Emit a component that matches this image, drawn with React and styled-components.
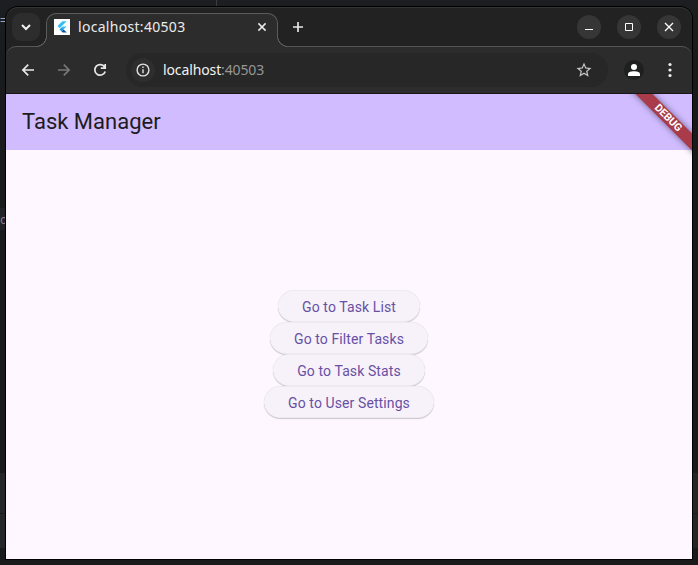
import React from "react";
import styled, { createGlobalStyle, css } from "styled-components";

const GlobalStyle = createGlobalStyle`
  *, *::before, *::after { box-sizing: border-box; }
  body { margin: 0; background: #1a1b1d; overflow: hidden; }
  button { border: 0; padding: 0; background: none; font: inherit; color: inherit; }
  svg { display: block; flex: none; }
`;

const Desktop = styled.div`
  position: relative;
  width: 698px;
  height: 565px;
  padding: 7px 6px 6px;
  background: linear-gradient(#1c1e21, #191a1c 60px, #191a1b);
  font-family: "Noto Sans", "Open Sans", sans-serif;
`;

const EditorLine = styled.span`
  position: absolute;
  left: ${(p) => p.$x}px;
  top: ${(p) => p.$y}px;
  width: ${(p) => p.$w}px;
  height: ${(p) => p.$h}px;
  background: ${(p) => p.$bg};
`;

const EditorText = styled.span`
  position: absolute;
  left: 0;
  top: ${(p) => p.$y}px;
  font: 9px/14px "Liberation Mono", monospace;
  font-size: ${(p) => p.$size}px;
  color: ${(p) => p.$color};
`;

const BrowserWindow = styled.div`
  position: relative;
  display: flex;
  flex-direction: column;
  height: 552px;
  border-radius: 12px 12px 0 0;
  background: #222222;
  box-shadow: 0 0 0 1px #000;
`;

const TabStrip = styled.div`
  display: flex;
  align-items: flex-start;
  height: 39px;
  padding: 6px 11px 0 6px;
  border-radius: 12px 12px 0 0;
  box-shadow: inset 0 1px #343434;
`;

const TabSearch = styled.button`
  display: grid;
  place-items: center;
  width: 28px;
  height: 28px;
  border-radius: 9px;
  background: #2d2d2d;
`;

const flare = css`
  content: "";
  position: absolute;
  bottom: 0;
  width: 11px;
  height: 11px;
`;

const Tab = styled.div`
  position: relative;
  z-index: 1;
  display: flex;
  align-items: center;
  width: 232px;
  height: 34px;
  margin-left: 6px;
  padding: 0 10px 6px 7px;
  border: 1px solid #5b5b5b;
  border-bottom: 0;
  border-radius: 10px 10px 0 0;
  background: #2c2c2c;

  &::before {
    ${flare}
    right: 100%;
    background: radial-gradient(circle at 0 0, transparent 9.7px, #5b5b5b 10.1px 10.8px, #2c2c2c 11.2px);
  }
  &::after {
    ${flare}
    left: 100%;
    background: radial-gradient(circle at 100% 0, transparent 9.7px, #5b5b5b 10.1px 10.8px, #2c2c2c 11.2px);
  }
`;

const Favicon = styled.span`
  display: grid;
  place-items: center;
  width: 16px;
  height: 16px;
  margin-top: -1px;
  background: #fff;
`;

const TabTitle = styled.span`
  flex: 1;
  margin: -2px 0 0 8px;
  font-size: 14px;
  line-height: 20px;
  letter-spacing: 0.3px;
  white-space: nowrap;
  color: #ebebeb;
`;

const TabClose = styled.span`
  margin-top: -1px;
`;

const NewTab = styled.button`
  margin: 8px 0 0 14px;
`;

const WindowControls = styled.div`
  display: flex;
  gap: 16px;
  margin: 2px 0 0 auto;
`;

const WindowButton = styled.button`
  display: grid;
  place-items: center;
  width: 24px;
  height: 24px;
  border-radius: 50%;
  background: #363636;
`;

const Toolbar = styled.div`
  display: flex;
  align-items: center;
  height: 48px;
  padding: 0 14px 0 14px;
  border-top: 1px solid #555;
  border-bottom: 1px solid #171717;
  border-radius: 10px 10px 0 0;
  background: #2c2c2c;
`;

const NavButtons = styled.div`
  display: flex;
  gap: 20px;
`;

const AddressBar = styled.div`
  display: flex;
  align-items: center;
  width: 482px;
  height: 34px;
  margin-left: 18px;
  padding: 0 15px 0 5px;
  border-radius: 17px;
  background: #272727;
`;

const SiteInfo = styled.span`
  display: grid;
  place-items: center;
  width: 24px;
  height: 24px;
  border-radius: 50%;
  background: #2e2e2e;
`;

const Url = styled.span`
  flex: 1;
  margin-left: 8px;
  font-size: 14px;
  line-height: 20px;
  letter-spacing: -0.12px;
  color: #f2f2f2;
`;

const Port = styled.span`
  color: #969696;
`;

const Avatar = styled.span`
  display: grid;
  place-items: center;
  width: 20px;
  height: 20px;
  margin-left: 16px;
  border-radius: 50%;
  background: #1e201f;
`;

const MenuButton = styled.button`
  margin-left: 18px;
`;

const Page = styled.main`
  position: relative;
  flex: 1;
  display: flex;
  flex-direction: column;
  overflow: hidden;
  background: #fef7ff;
  font-family: Roboto, sans-serif;
`;

const AppBar = styled.header`
  display: flex;
  align-items: center;
  height: 56px;
  padding-left: 16px;
  background: #d0bcff;
`;

const AppTitle = styled.h1`
  margin: 0;
  font-size: 22px;
  font-weight: 400;
  line-height: 28px;
  color: #1d1b20;
`;

const Actions = styled.div`
  flex: 1;
  display: flex;
  flex-direction: column;
  align-items: center;
  justify-content: center;
  padding-bottom: 1px;
`;

const ActionButton = styled.button`
  height: 32px;
  padding: 2px 24px 0;
  border-radius: 16px;
  background: #f7f2fa;
  box-shadow: inset 0 1px rgba(0, 0, 0, 0.03), inset 0 -1px rgba(0, 0, 0, 0.03),
    0 1px 1px rgba(0, 0, 0, 0.2), 0 0 1px rgba(0, 0, 0, 0.07);
  font-size: 14px;
  line-height: 20px;
  letter-spacing: 0.1px;
  color: #6750a4;
`;

const DebugBanner = styled.div`
  position: absolute;
  top: 18px;
  right: -36px;
  width: 120px;
  height: 12px;
  transform: rotate(45deg);
  background: #a93b4a;
  box-shadow: 0 0 6px rgba(0, 0, 0, 0.5);
  font-size: 10.6px;
  font-weight: 700;
  line-height: 12px;
  text-align: center;
  color: #fff;
`;

const actions = ["Go to Task List", "Go to Filter Tasks", "Go to Task Stats", "Go to User Settings"];

const Stroke = ({ size = 16, color = "#e8e8e8", width = 1.7, d }) => (
  <svg width={size} height={size} viewBox="0 0 16 16" fill="none" stroke={color} strokeWidth={width}>
    <path d={d} />
  </svg>
);

export default function App() {
  return (
    <>
      <GlobalStyle />
      <Desktop>
        <EditorLine $x={216} $y={0} $w={1} $h={6} $bg="#3b3c40" />
        <EditorLine $x={0} $y={118 + 90} $w={5} $h={22} $bg="#222329" />
        <EditorLine $x={0} $y={473} $w={5} $h={40} $bg="#24262a" />
        <EditorLine $x={0} $y={514} $w={5} $h={34} $bg="#24262a" />
        <EditorLine $x={693} $y={473} $w={5} $h={40} $bg="#242424" />
        <EditorLine $x={693} $y={514} $w={5} $h={34} $bg="#242424" />
        <EditorText $y={15} $size={10} $color="#a0a0b0">=</EditorText>
        <EditorText $y={214} $size={12} $color="#987d91">c</EditorText>
        <BrowserWindow>
          <TabStrip>
            <TabSearch aria-label="Search tabs">
              <Stroke d="M4 6 8 10l4-4" width={2} color="#f0f0f0" />
            </TabSearch>
            <Tab>
              <Favicon>
                <svg width="14" height="14" viewBox="0 0 14 14">
                  <path d="M7.4 1.2h4.2L4.6 8.2 2.5 6.1z" fill="#35bdf5" />
                  <path d="M7.6 6.4h4L8.4 9.6 6.3 7.6z" fill="#35bdf5" />
                  <path d="m4.5 9.5 2.1-2.1 2.1 2.1-2.1 2.1z" fill="#1c9be6" />
                  <path d="m6.6 11.6 2.1-2.1 3.1 3.1H7.6z" fill="#07549b" />
                </svg>
              </Favicon>
              <TabTitle>localhost:40503</TabTitle>
              <TabClose>
                <Stroke size={10} width={2.4} d="m2.2 2.2 11.6 11.6M13.8 2.2 2.2 13.8" />
              </TabClose>
            </Tab>
            <NewTab aria-label="New tab">
              <Stroke size={12} width={2.2} d="M8 1.3v13.4M1.3 8h13.4" />
            </NewTab>
            <WindowControls>
              <WindowButton aria-label="Minimize">
                <Stroke width={1} color="#fff" d="M4 10.5h8" />
              </WindowButton>
              <WindowButton aria-label="Maximize">
                <Stroke width={1} color="#fff" d="M4.5 4.5h7v7h-7z" />
              </WindowButton>
              <WindowButton aria-label="Close">
                <Stroke width={1.3} color="#fff" d="m4 4 8 8m0-8-8 8" />
              </WindowButton>
            </WindowControls>
          </TabStrip>
          <Toolbar>
            <NavButtons>
              <Stroke d="M14 8H3M8.2 2.7 2.9 8l5.3 5.3" />
              <Stroke color="#777" d="M2 8h11M7.8 2.7 13.1 8l-5.3 5.3" />
              <Stroke d="M12.6 5A5.3 5.3 0 1 0 13.2 9.4M13.2 1.9v4.3H8.8" />
            </NavButtons>
            <AddressBar>
              <SiteInfo>
                <svg width="14" height="14" viewBox="0 0 14 14" fill="none" stroke="#e2e2e2" strokeWidth="1.4">
                  <circle cx="7" cy="7" r="5.9" />
                  <path d="M7 6.3v4M7 3.6v1.5" />
                </svg>
              </SiteInfo>
              <Url>
                localhost<Port>:40503</Port>
              </Url>
              <svg width="18" height="18" viewBox="0 0 24 24" fill="#c7c7c7">
                <path d="m22 9.24-7.19-.62L12 2 9.19 8.63 2 9.24l5.46 4.73L5.82 21 12 17.27 18.18 21l-1.63-7.03zM12 15.4l-3.76 2.27 1-4.28-3.32-2.88 4.38-.38L12 6.1l1.71 4.04 4.38.38-3.32 2.88 1 4.28z" />
              </svg>
            </AddressBar>
            <Avatar>
              <svg width="12" height="12" viewBox="0 0 12 12" fill="#fff">
                <circle cx="6" cy="3" r="3" />
                <path d="M0 12v-1.8C0 8.1 3 7.3 6 7.3s6 .8 6 2.9V12z" />
              </svg>
            </Avatar>
            <MenuButton aria-label="Menu">
              <svg width="16" height="16" viewBox="0 0 16 16" fill="#eee">
                <circle cx="8" cy="2.5" r="1.6" />
                <circle cx="8" cy="8" r="1.6" />
                <circle cx="8" cy="13.5" r="1.6" />
              </svg>
            </MenuButton>
          </Toolbar>
          <Page>
            <AppBar>
              <AppTitle>Task Manager</AppTitle>
            </AppBar>
            <Actions>
              {actions.map((label) => (
                <ActionButton key={label}>{label}</ActionButton>
              ))}
            </Actions>
            <DebugBanner>DEBUG</DebugBanner>
          </Page>
        </BrowserWindow>
      </Desktop>
    </>
  );
}
